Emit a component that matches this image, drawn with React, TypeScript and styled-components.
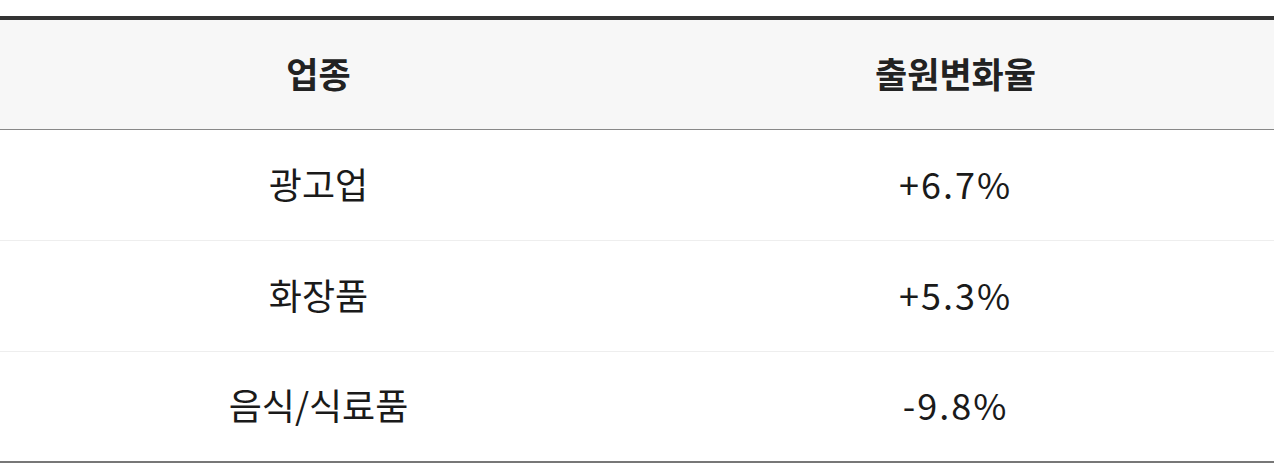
import React from "react";
import styled, { createGlobalStyle } from "styled-components";

const GlobalStyle = createGlobalStyle`
  body {
    margin: 0;
    background: #fff;
    font-family: "Noto Sans CJK KR", "Noto Sans", sans-serif;
  }
`;

const Wrap = styled.div`
  padding-top: 16px;
  width: 1274px;
`;

const Table = styled.table`
  width: 100%;
  border-collapse: collapse;
  table-layout: fixed;
  border-top: 4px solid #333;
  border-bottom: 2px solid #777;
`;

const HeadCell = styled.th`
  height: 111px;
  padding: 0 0 4px;
  box-sizing: border-box;
  background: #f7f7f7;
  border-bottom: 1px solid #888;
  font-size: 35px;
  font-weight: 700;
  color: #222;
  text-align: center;
  vertical-align: middle;
`;

const Cell = styled.td<{ $num?: boolean }>`
  height: 111px;
  padding: 0 0 4px;
  box-sizing: border-box;
  font-size: 36px;
  font-weight: 400;
  letter-spacing: ${({ $num }) => ($num ? "2px" : "0")};
  color: #1a1a1a;
  text-align: center;
  vertical-align: middle;
`;

const Row = styled.tr<{ $last?: boolean }>`
  border-bottom: ${({ $last }) => ($last ? "none" : "1px solid #eee")};
`;

const rows = [
  { industry: "광고업", change: "+6.7%" },
  { industry: "화장품", change: "+5.3%" },
  { industry: "음식/식료품", change: "-9.8%" },
];

export default function App() {
  return (
    <>
      <GlobalStyle />
      <Wrap>
        <Table>
          <thead>
            <tr>
              <HeadCell>업종</HeadCell>
              <HeadCell>출원변화율</HeadCell>
            </tr>
          </thead>
          <tbody>
            {rows.map((r, i) => (
              <Row key={r.industry} $last={i === rows.length - 1}>
                <Cell>{r.industry}</Cell>
                <Cell $num>{r.change}</Cell>
              </Row>
            ))}
          </tbody>
        </Table>
      </Wrap>
    </>
  );
}
